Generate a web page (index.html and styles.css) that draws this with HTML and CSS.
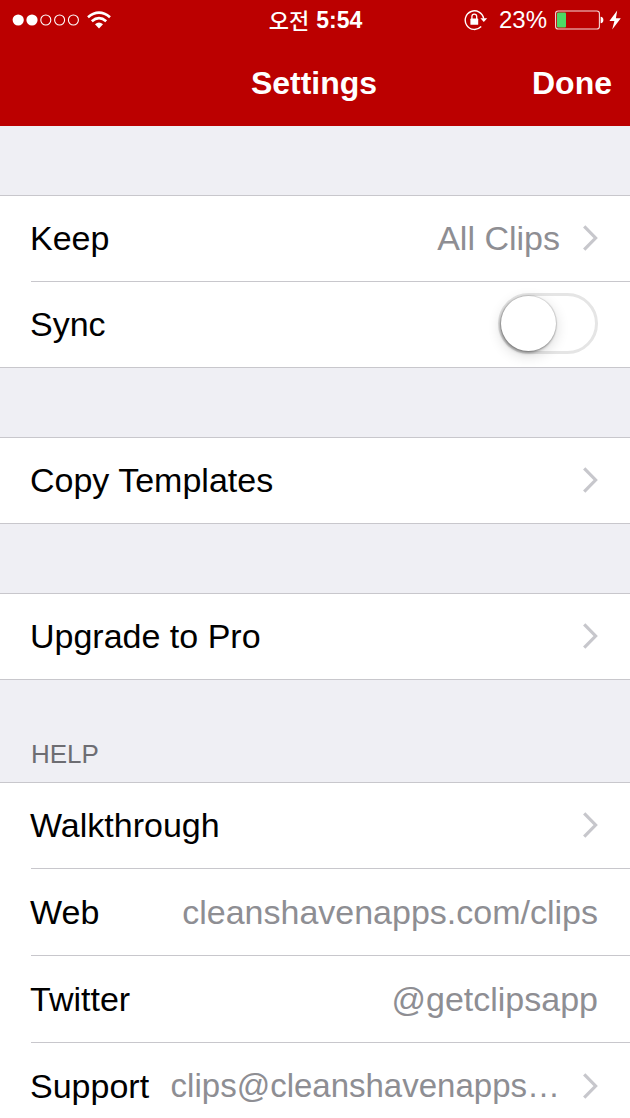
FILE: index.html
```html
<!DOCTYPE html>
<html lang="en">
<head>
<meta charset="utf-8">
<meta name="viewport" content="width=device-width, initial-scale=1">
<title>Settings</title>
<link rel="stylesheet" href="styles.css">
</head>
<body>
<svg class="sprite" aria-hidden="true">
  <symbol id="chevron" viewBox="0 0 16 26"><path d="M2.2 1.4 13.6 13 2.2 24.6" fill="none" stroke="#c7c7cc" stroke-width="3.2"/></symbol>
</svg>
<div class="app">
  <header class="top">
    <div class="status">
      <div class="status-left">
        <svg class="signal" viewBox="0 0 68 12" aria-label="Signal: 2 of 5">
          <g fill="#fff"><circle cx="6.2" cy="6" r="5.6"/><circle cx="20" cy="6" r="5.6"/></g>
          <g fill="none" stroke="#fff" stroke-width="1.1"><circle cx="33.8" cy="6" r="5"/><circle cx="47.6" cy="6" r="5"/><circle cx="61.4" cy="6" r="5"/></g>
        </svg>
        <svg class="wifi" viewBox="0 0 24 18" aria-label="Wi-Fi">
          <g fill="none" stroke="#fff" stroke-width="2.7"><path d="M1 6.2Q12-2.9 23 6.2"/><path d="M4.8 10.2Q12 4.1 19.2 10.2"/></g>
          <path d="M8 13.3Q12 9.7 16 13.3L12 17.4Z" fill="#fff"/>
        </svg>
      </div>
      <div class="time"><span class="ampm" lang="ko">오전</span><span>5:54</span></div>
      <div class="status-right">
        <svg class="lock" viewBox="0 0 24 22" aria-label="Rotation lock">
          <path d="M17.2 17.6A9.3 9.3 0 1 1 19.7 9.6" fill="none" stroke="#fff" stroke-width="1.4"/>
          <path d="M16.4 9.2h6.8l-3.4 3.9z" fill="#fff"/>
          <rect x="6.4" y="9.6" width="7.8" height="6.2" rx=".6" fill="#fff"/>
          <path d="M7.9 10V7.6a2.4 2.4 0 0 1 4.8 0V10" fill="none" stroke="#fff" stroke-width="1.3"/>
        </svg>
        <span class="percent">23%</span>
        <svg class="battery" viewBox="0 0 49 20" aria-label="Battery charging">
          <rect x=".6" y="1" width="43.8" height="18" rx="2.6" fill="none" stroke="#fff" stroke-opacity=".85" stroke-width="1.1"/>
          <rect x="2" y="2.6" width="9" height="14.8" rx="1" fill="#4cd964"/>
          <path d="M45.6 6.8Q48.4 7 48.4 10T45.6 13.2Z" fill="#fff"/>
        </svg>
        <svg class="bolt" viewBox="0 0 12 20" aria-hidden="true"><path d="M8.2.5.4 11h5L3.2 19.6 11.8 8.2H6.9z" fill="#fff"/></svg>
      </div>
    </div>
    <div class="navbar">
      <h1 class="title">Settings</h1>
      <button class="done" type="button">Done</button>
    </div>
  </header>
  <main class="content">
    <section class="group">
      <button class="row" type="button"><span class="label">Keep</span><span class="value">All Clips</span><svg class="chevron"><use href="#chevron"/></svg></button>
      <div class="row"><label class="label" for="sync">Sync</label><input class="switch" id="sync" type="checkbox" role="switch"></div>
    </section>
    <section class="group">
      <button class="row" type="button"><span class="label">Copy Templates</span><svg class="chevron"><use href="#chevron"/></svg></button>
    </section>
    <section class="group">
      <button class="row" type="button"><span class="label">Upgrade to Pro</span><svg class="chevron"><use href="#chevron"/></svg></button>
    </section>
    <h2 class="heading">HELP</h2>
    <section class="group group-headed">
      <button class="row" type="button"><span class="label">Walkthrough</span><svg class="chevron"><use href="#chevron"/></svg></button>
      <a class="row row-link" href="#web"><span class="label">Web</span><span class="value">cleanshavenapps.com/clips</span></a>
      <a class="row row-link" href="#twitter"><span class="label">Twitter</span><span class="value">@getclipsapp</span></a>
      <a class="row row-link" href="#support"><span class="label">Support</span><span class="value value-long">clips@cleanshavenapps…</span><svg class="chevron"><use href="#chevron"/></svg></a>
    </section>
  </main>
</div>
</body>
</html>
```
FILE: styles.css
```css
* { box-sizing: border-box; }
body {
  margin: 0;
  background: #efeff4;
  color: #000;
  font-family: "Liberation Sans", Arial, "Noto Sans CJK KR", sans-serif;
}
.sprite { position: absolute; width: 0; height: 0; }
.app { display: flex; flex-direction: column; height: 100vh; }
.top { flex: none; background: #bb0000; color: #fff; }
.status {
  display: grid;
  grid-template-columns: 1fr auto 1fr;
  align-items: center;
  height: 40px;
  padding: 0 9px 0 12px;
}
.status-left, .status-right, .time { display: flex; align-items: center; }
.status-right { justify-content: flex-end; }
.signal { width: 68px; height: 12px; }
.wifi { width: 24px; height: 18px; margin-left: 7px; }
.time { gap: 7px; padding-right: 2px; font-size: 23px; font-weight: bold; line-height: 40px; }
.ampm { padding-bottom: 2px; font-family: "Noto Sans CJK KR", sans-serif; font-size: 22px; font-weight: 500; line-height: 38px; }
.lock { width: 24px; height: 22px; }
.percent { margin: 0 8px 0 11px; font-size: 24px; line-height: 40px; }
.battery { width: 49px; height: 20px; }
.bolt { width: 12px; height: 20px; margin-left: 5px; }
.navbar {
  display: grid;
  grid-template-columns: 1fr auto 1fr;
  align-items: center;
  height: 86px;
  padding: 0 18px 0 16px;
}
.title { grid-column: 2; margin: 0; font-size: 32px; line-height: 40px; font-weight: bold; }
.done {
  justify-self: end;
  padding: 0;
  border: 0;
  background: none;
  color: inherit;
  font: bold 32px/40px "Liberation Sans", Arial, sans-serif;
}
.content { flex: 1; min-height: 0; overflow-y: auto; scrollbar-width: none; }
.group { margin-top: 69px; border-top: 1px solid #c8c7cc; background: #fff; }
.group-headed { margin-top: 0; }
.row {
  display: flex;
  align-items: center;
  width: 100%;
  height: 86px;
  padding: 0 32px 2px 30px;
  border: 0;
  border-bottom: 1px solid #c8c7cc;
  background: #fff;
  color: #000;
  font: 34px/40px "Liberation Sans", Arial, sans-serif;
  text-align: left;
  text-decoration: none;
}
.row-link { height: 87px; padding-bottom: 0; }
.row:not(:last-child) {
  border-image: linear-gradient(to right, #fff 32px, #c8c7cc 32px) 1;
}
.label { flex: 1 0 auto; }
.value { color: #8e8e93; white-space: nowrap; }
.value-long { font-size: 33px; }
.chevron { flex: none; width: 16px; height: 26px; margin-left: 22px; }
.switch {
  appearance: none;
  display: flex;
  width: 100px;
  height: 61px;
  margin: 0;
  padding: 0;
  border: 3px solid #e5e5e5;
  border-radius: 31px;
  background: #fff;
}
.switch::before {
  content: "";
  width: 55px;
  height: 55px;
  border-radius: 50%;
  background: #fff;
  box-shadow: 0 0 1px 1px rgba(0, 0, 0, .14), -1px 2px 3px rgba(0, 0, 0, .3), 0 4px 14px rgba(0, 0, 0, .16);
}
.switch:checked { justify-content: flex-end; background: #4cd964; border-color: #4cd964; }
.heading {
  margin: 0;
  padding: 59px 31px 13px;
  color: #6d6d72;
  font-size: 26px;
  font-weight: normal;
  line-height: 30px;
}
```
